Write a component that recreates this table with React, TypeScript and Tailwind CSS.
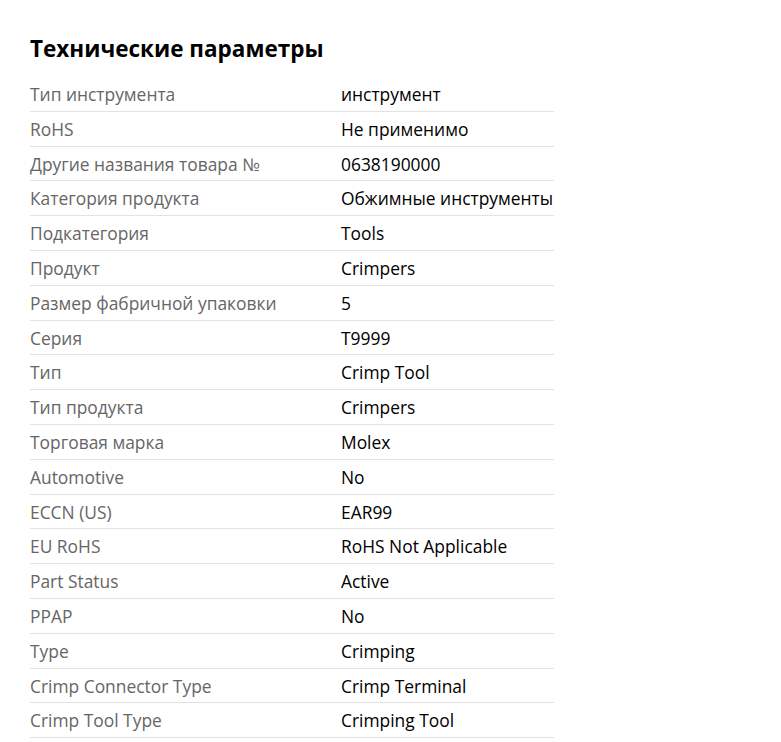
const rows: [string, string][] = [
  ["Тип инструмента", "инструмент"],
  ["RoHS", "Не применимо"],
  ["Другие названия товара №", "0638190000"],
  ["Категория продукта", "Обжимные инструменты"],
  ["Подкатегория", "Tools"],
  ["Продукт", "Crimpers"],
  ["Размер фабричной упаковки", "5"],
  ["Серия", "T9999"],
  ["Тип", "Crimp Tool"],
  ["Тип продукта", "Crimpers"],
  ["Торговая марка", "Molex"],
  ["Automotive", "No"],
  ["ECCN (US)", "EAR99"],
  ["EU RoHS", "RoHS Not Applicable"],
  ["Part Status", "Active"],
  ["PPAP", "No"],
  ["Type", "Crimping"],
  ["Crimp Connector Type", "Crimp Terminal"],
  ["Crimp Tool Type", "Crimping Tool"],
];

const App = () => {
  return (
    <div className="min-h-[742px] bg-white px-[30px] pt-[34px] font-['Open_Sans',sans-serif]">
      <h2 className="text-[22.5px] font-bold leading-[30px] text-black">Технические параметры</h2>
      <div className="mt-[13px] w-[524px]">
        {rows.map(([label, value]) => (
          <div key={label} className="flex border-b border-[#e3e3e3] pt-[6px] pb-[4px] text-[17.4px] leading-[23.8px]">
            <div className="w-[311px] shrink-0 text-[#666]">{label}</div>
            <div className="whitespace-nowrap text-black">{value}</div>
          </div>
        ))}
      </div>
    </div>
  );
};

export default App;
